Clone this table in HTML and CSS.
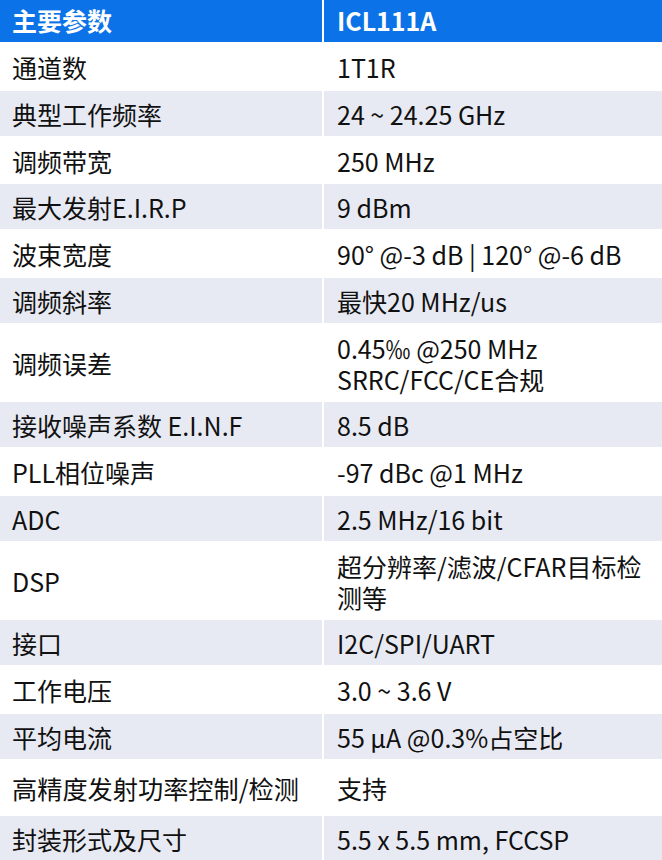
FILE: index.html
```html
<!DOCTYPE html>
<html lang="zh-CN">
<head>
<meta charset="utf-8">
<link rel="stylesheet" href="styles.css">
</head>
<body>
<div class="spec">
  <div class="cell head">主要参数</div><div class="cell head">ICL111A</div>
  <div class="cell">通道数</div><div class="cell">1T1R</div>
  <div class="cell alt">典型工作频率</div><div class="cell alt">24 ~ 24.25 GHz</div>
  <div class="cell">调频带宽</div><div class="cell">250 MHz</div>
  <div class="cell alt">最大发射E.I.R.P</div><div class="cell alt">9 dBm</div>
  <div class="cell">波束宽度</div><div class="cell">90° @-3 dB | 120° @-6 dB</div>
  <div class="cell alt">调频斜率</div><div class="cell alt">最快20 MHz/us</div>
  <div class="cell">调频误差</div><div class="cell">0.45‰ @250 MHz<br>SRRC/FCC/CE合规</div>
  <div class="cell alt">接收噪声系数 E.I.N.F</div><div class="cell alt">8.5 dB</div>
  <div class="cell">PLL相位噪声</div><div class="cell">-97 dBc @1 MHz</div>
  <div class="cell alt">ADC</div><div class="cell alt">2.5 MHz/16 bit</div>
  <div class="cell">DSP</div><div class="cell">超分辨率/滤波/CFAR目标检测等</div>
  <div class="cell alt">接口</div><div class="cell alt">I2C/SPI/UART</div>
  <div class="cell">工作电压</div><div class="cell">3.0 ~ 3.6 V</div>
  <div class="cell alt">平均电流</div><div class="cell alt">55 µA @0.3%占空比</div>
  <div class="cell big">高精度发射功率控制/检测</div><div class="cell">支持</div>
  <div class="cell alt">封装形式及尺寸</div><div class="cell alt">5.5 x 5.5 mm, FCCSP</div>
</div>
</body>
</html>
```
FILE: styles.css
```css
html, body {
  margin: 0;
  padding: 0;
  background: #ffffff;
}
.spec {
  width: 662px;
  display: grid;
  grid-template-columns: 322px 1fr;
  column-gap: 2px;
  row-gap: 2px;
  background: #ffffff;
  font-family: "Noto Sans CJK SC", "Noto Sans", sans-serif;
  font-size: 25px;
  line-height: 30.8px;
  color: #111111;
}
.cell {
  padding: 8px 12px 6px 12px;
  display: flex;
  align-items: center;
  background: #ffffff;
}
.cell:nth-child(even) {
  padding-left: 13px;
}
.alt {
  background: #e8eaf3;
}
.head {
  background: #0b72e8;
  color: #ffffff;
  font-weight: 700;
  height: 42px;
  box-sizing: border-box;
  padding-top: 5px;
  padding-bottom: 6px;
}
.big {
  font-size: 25.2px;
  line-height: 39px;
  white-space: nowrap;
  padding-right: 0;
}
```
